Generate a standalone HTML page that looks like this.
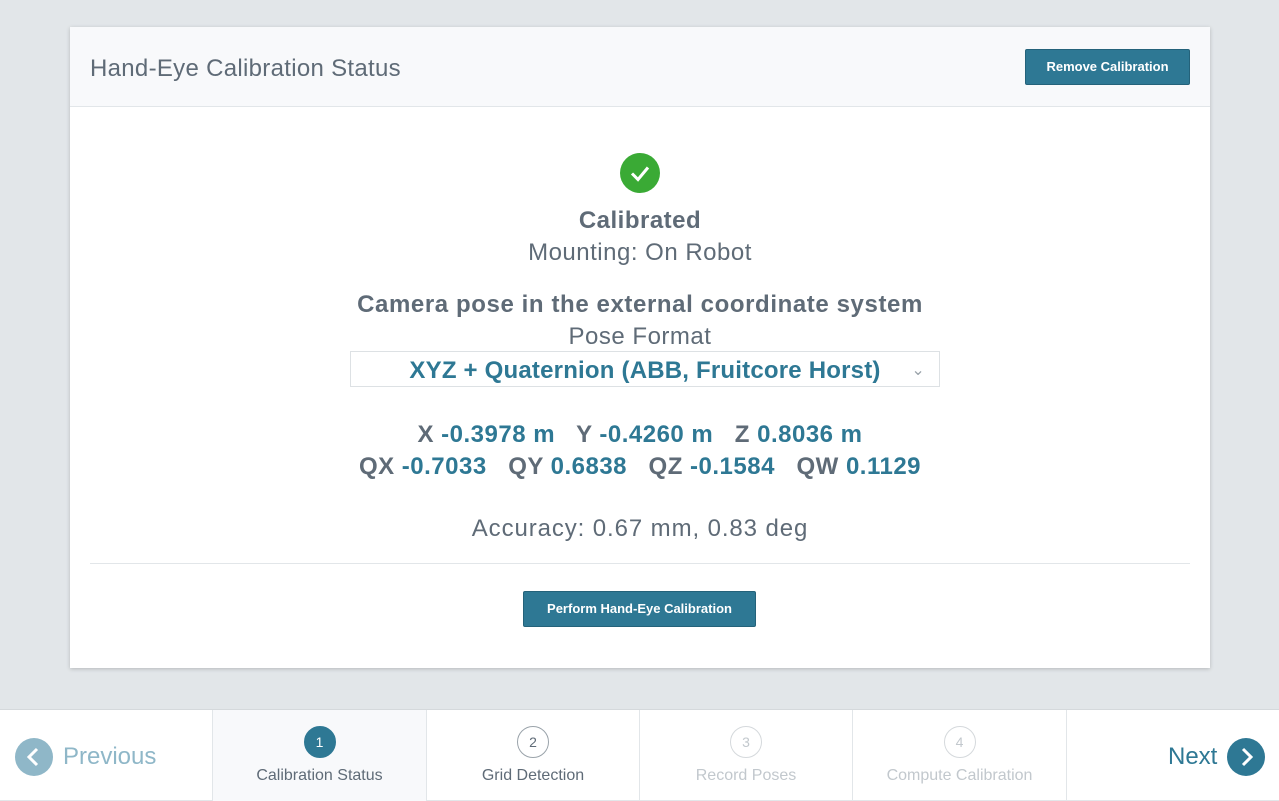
<!DOCTYPE html>
<html><head><style>
*{box-sizing:border-box;margin:0;padding:0}
body{width:1279px;height:800px;background:#e2e6e9;font-family:"Liberation Sans",sans-serif;position:relative;overflow:hidden;color:#5f6b77}
.card{position:absolute;left:70px;top:27px;width:1140px;height:641px;background:#fff;box-shadow:0 1px 4px rgba(0,0,0,.2)}
.hdr{height:80px;background:#f8f9fb;border-bottom:1px solid #e2e6e9;position:relative}
.hdr h1{position:absolute;left:20px;top:28px;font-weight:normal;font-size:24px;color:#5f6b77;letter-spacing:0.3px}
.btn{background:#2e7894;color:#fff;font-size:13px;font-weight:bold;border:1px solid #24627a;border-radius:2px;text-align:center}
.c{position:absolute;left:0;width:100%;text-align:center;letter-spacing:0.5px}
.b{color:#2e7894}
.foot{position:absolute;left:0;top:709px;width:1279px;height:91px;background:#fff;border-top:1px solid #d5d9dc}
.step{position:absolute;top:0;height:91px;border-left:1px solid #e2e6e9;text-align:center;font-size:16px}
.num{width:32px;height:32px;border-radius:50%;border:1px solid #9aa3aa;margin:16px auto 9px;line-height:30px;font-size:14px}
</style></head><body>
<div class="card">
<div class="hdr"><h1>Hand-Eye Calibration Status</h1>
<div class="btn" style="position:absolute;left:955px;top:22px;width:165px;height:36px;line-height:34px">Remove Calibration</div></div>
<div style="position:absolute;left:550px;top:126px;width:40px;height:40px;border-radius:50%;background:#3aaa35">
<svg width="40" height="40"><path d="M12 20.5l6 6 10-12" stroke="#fff" stroke-width="3" fill="none"/></svg></div>
<div class="c" style="top:180px;font-size:24px;font-weight:bold">Calibrated</div>
<div class="c" style="top:212px;font-size:24px">Mounting: On Robot</div>
<div class="c" style="top:264px;font-size:24px;font-weight:bold;letter-spacing:0.6px">Camera pose in the external coordinate system</div>
<div class="c" style="top:296px;font-size:24px">Pose Format</div>
<div style="position:absolute;left:280px;top:324px;width:590px;height:36px;border:1px solid #dde1e4;text-align:center;font-size:24px;line-height:38px;font-weight:bold;letter-spacing:0.2px" class="b">XYZ + Quaternion (ABB, Fruitcore Horst)<span style="position:absolute;right:14px;top:0;color:#9aa3aa;font-size:16px;font-weight:normal">&#8964;</span></div>
<div class="c" style="top:394px;font-size:24px;font-weight:bold">X <span class="b">-0.3978 m</span> &nbsp; Y <span class="b">-0.4260 m</span> &nbsp; Z <span class="b">0.8036 m</span></div>
<div class="c" style="top:426px;font-size:24px;font-weight:bold">QX <span class="b">-0.7033</span> &nbsp; QY <span class="b">0.6838</span> &nbsp; QZ <span class="b">-0.1584</span> &nbsp; QW <span class="b">0.1129</span></div>
<div class="c" style="top:488px;font-size:24px;letter-spacing:0.9px">Accuracy: 0.67 mm, 0.83 deg</div>
<div style="position:absolute;left:20px;top:536px;width:1100px;border-top:1px solid #e2e6e9"></div>
<div class="btn" style="position:absolute;left:453px;top:564px;width:233px;height:36px;line-height:34px">Perform Hand-Eye Calibration</div>
</div>
<div class="foot">
<div style="position:absolute;left:15px;top:28px;width:38px;height:38px;border-radius:50%;background:#8fb7c8"><svg width="38" height="38"><path d="M22 11l-8 8 8 8" stroke="#fff" stroke-width="3" fill="none"/></svg></div>
<div style="position:absolute;left:63px;top:33px;font-size:24px;color:#8fb7c8">Previous</div>
<div class="step" style="left:212px;width:214px;background:#f8f9fb"><div class="num" style="background:#2e7894;border-color:#2e7894;color:#fff">1</div>Calibration Status</div>
<div class="step" style="left:426px;width:213px"><div class="num">2</div>Grid Detection</div>
<div class="step" style="left:639px;width:213px;color:#c2c8cd"><div class="num" style="border-color:#d5d9dc">3</div>Record Poses</div>
<div class="step" style="left:852px;width:214px;color:#c2c8cd"><div class="num" style="border-color:#d5d9dc">4</div>Compute Calibration</div>
<div class="step" style="left:1066px;width:213px"></div>
<div style="position:absolute;left:1168px;top:33px;font-size:24px;color:#2e7894">Next</div>
<div style="position:absolute;left:1227px;top:28px;width:38px;height:38px;border-radius:50%;background:#2e7894"><svg width="38" height="38"><path d="M16 11l8 8-8 8" stroke="#fff" stroke-width="3" fill="none"/></svg></div>
</div>
</body></html>
